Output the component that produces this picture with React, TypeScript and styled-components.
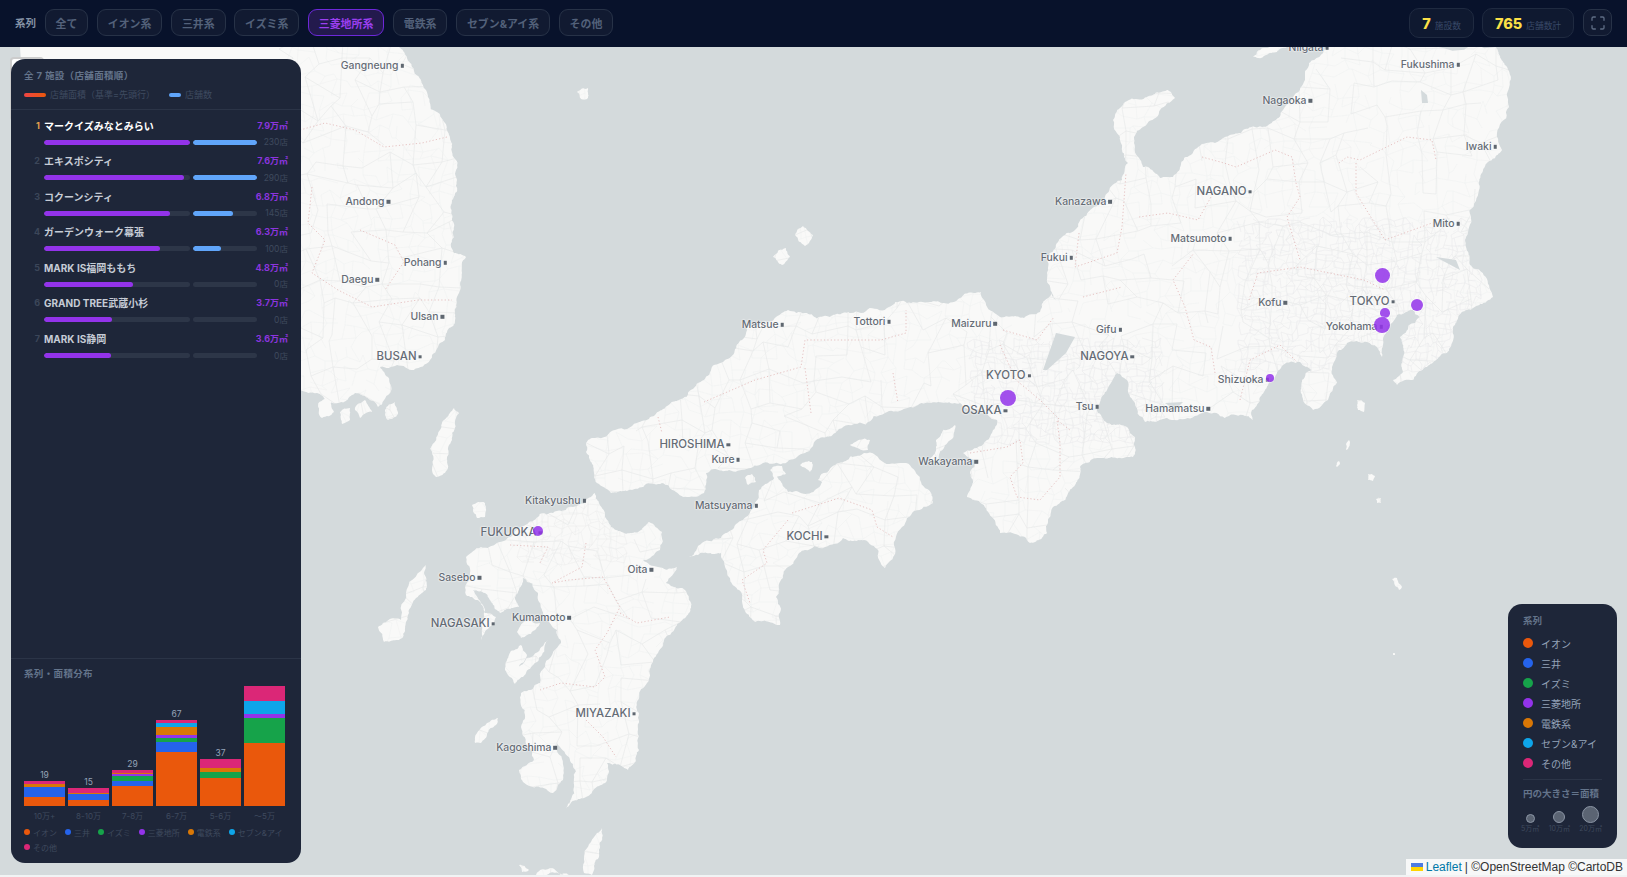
import { useMemo } from "react";
import styled, { createGlobalStyle } from "styled-components";
import { Maximize } from "lucide-react";

const SERIES = [
    { name: "イオン", color: "#ea580c" },
    { name: "三井", color: "#2563eb" },
    { name: "イズミ", color: "#16a34a" },
    { name: "三菱地所", color: "#9333ea" },
    { name: "電鉄系", color: "#d97706" },
    { name: "セブン&アイ", color: "#0ea5e9" },
    { name: "その他", color: "#db2777" },
];

const FILTERS = ["全て", "イオン系", "三井系", "イズミ系", "三菱地所系", "電鉄系", "セブン&アイ系", "その他"];

const FACILITIES = [
    { name: "マークイズみなとみらい", area: 7.9, shops: 230 },
    { name: "エキスポシティ", area: 7.6, shops: 290 },
    { name: "コクーンシティ", area: 6.8, shops: 145 },
    { name: "ガーデンウォーク幕張", area: 6.3, shops: 100 },
    { name: "MARK IS福岡ももち", area: 4.8, shops: 0 },
    { name: "GRAND TREE武蔵小杉", area: 3.7, shops: 0 },
    { name: "MARK IS静岡", area: 3.6, shops: 0 },
];

// heights in px, bottom to top, index into SERIES
const BARS = [
    { label: "10万+", count: 19, parts: [[0, 9], [1, 9.7], [4, 3], [6, 3.3]] },
    { label: "8-10万", count: 15, parts: [[0, 6], [1, 5.7], [4, 1.3], [6, 5]] },
    { label: "7-8万", count: 29, parts: [[0, 20], [1, 5], [2, 5], [3, 2], [4, 1], [6, 3]] },
    { label: "6-7万", count: 67, parts: [[0, 54], [1, 10], [2, 4], [3, 3], [4, 7.7], [5, 4.3], [6, 3]] },
    { label: "5-6万", count: 37, parts: [[0, 28], [2, 6], [4, 4], [6, 9]] },
    { label: "〜5万", count: 0, parts: [[0, 63], [2, 25], [3, 4], [5, 13], [6, 15]] },
];

const CITIES = [
    { name: "Gangneung", x: 402, y: 65 },
    { name: "Andong", x: 388, y: 201 },
    { name: "Pohang", x: 445, y: 262 },
    { name: "Daegu", x: 377, y: 279 },
    { name: "Ulsan", x: 442, y: 316 },
    { name: "BUSAN", x: 420, y: 356, major: true },
    { name: "Matsue", x: 782, y: 324 },
    { name: "Tottori", x: 889, y: 321 },
    { name: "Maizuru", x: 995, y: 323 },
    { name: "HIROSHIMA", x: 728, y: 444, major: true },
    { name: "Kure", x: 738, y: 459 },
    { name: "Wakayama", x: 976, y: 461 },
    { name: "Kitakyushu", x: 584, y: 500 },
    { name: "FUKUOKA", x: 540, y: 532, major: true },
    { name: "Matsuyama", x: 756, y: 505 },
    { name: "KOCHI", x: 826, y: 536, major: true },
    { name: "Sasebo", x: 479, y: 577 },
    { name: "Oita", x: 651, y: 569 },
    { name: "NAGASAKI", x: 493, y: 623, major: true },
    { name: "Kumamoto", x: 569, y: 617 },
    { name: "MIYAZAKI", x: 634, y: 713, major: true },
    { name: "Kagoshima", x: 555, y: 747 },
    { name: "Niigata", x: 1327, y: 47 },
    { name: "Fukushima", x: 1458, y: 64 },
    { name: "Nagaoka", x: 1310, y: 100 },
    { name: "Iwaki", x: 1495, y: 146 },
    { name: "NAGANO", x: 1250, y: 191, major: true },
    { name: "Kanazawa", x: 1110, y: 201 },
    { name: "Matsumoto", x: 1230, y: 238 },
    { name: "Mito", x: 1458, y: 223 },
    { name: "Fukui", x: 1071, y: 257 },
    { name: "Kofu", x: 1285, y: 302 },
    { name: "TOKYO", x: 1393, y: 301, major: true },
    { name: "Gifu", x: 1120, y: 329 },
    { name: "NAGOYA", x: 1132, y: 356, major: true },
    { name: "KYOTO", x: 1029, y: 375, major: true },
    { name: "OSAKA", x: 1005, y: 410, major: true },
    { name: "Tsu", x: 1097, y: 406 },
    { name: "Hamamatsu", x: 1208, y: 408 },
    { name: "Shizuoka", x: 1267, y: 379 },
    { name: "Yokohama", x: 1381, y: 326 },
];

const MARKERS = [
    { x: 1382, y: 275, r: 7.5 },
    { x: 1417, y: 305, r: 6.3 },
    { x: 1385, y: 313, r: 4.8 },
    { x: 1382, y: 325, r: 8.3 },
    { x: 1270, y: 378, r: 4.4 },
    { x: 1008, y: 398, r: 8.3 },
    { x: 538, y: 531, r: 5.2 },
];

const LAND = [
    // korea
    "20,47 399,47 412,67 426,90 445,123 452,147 457,180 452,200 454,227 451,247 454,253 466,257 462,273 457,297 455,323 445,340 430,360 414,370 397,365 380,367 388,377 390,393 378,407 355,393 338,403 317,393 300,390 20,400",
    // honshu
    "586,443 595,438 637,423 662,410 679,400 704,380 725,360 742,340 746,327 776,317 788,310 805,313 830,317 851,313 889,307 919,302 944,303 960,298 981,292 986,305 1000,317 1024,318 1040,312 1051,293 1056,300 1047,273 1047,260 1062,237 1075,230 1100,203 1122,180 1128,163 1120,137 1113,120 1120,108 1147,97 1168,90 1175,98 1160,110 1143,127 1134,137 1143,167 1160,178 1173,177 1185,157 1215,143 1241,133 1262,127 1283,110 1305,80 1309,63 1326,47 1496,47 1507,67 1509,107 1502,150 1487,163 1479,190 1468,233 1466,247 1472,267 1493,297 1467,310 1453,327 1452,343 1447,353 1427,367 1413,380 1397,385 1393,380 1403,372 1403,347 1400,337 1420,317 1413,310 1397,315 1383,340 1382,357 1377,347 1367,342 1347,343 1337,353 1332,367 1337,383 1328,400 1313,410 1303,400 1302,380 1312,370 1300,362 1283,365 1275,377 1260,397 1252,410 1253,420 1243,415 1207,412 1167,418 1145,422 1135,403 1130,397 1127,380 1117,373 1107,390 1098,413 1107,423 1127,427 1135,437 1133,457 1120,458 1097,458 1080,467 1073,487 1053,507 1047,533 1030,543 1000,533 992,517 967,497 970,473 975,460 963,453 993,430 997,420 985,412 960,403 931,403 902,410 885,413 843,427 826,437 805,453 797,457 763,463 729,470 706,473 704,493 687,497 662,483 632,490 611,493 597,483 590,460",
    // shikoku
    "689,557 721,538 746,517 759,490 776,475 788,492 818,488 839,463 864,453 906,463 931,493 933,503 902,527 885,568 864,540 843,538 805,550 788,567 776,597 780,625 755,622 746,613 742,597 729,577 721,553 700,553",
    // kyushu
    "529,522 553,513 569,507 595,493 599,503 611,527 632,533 649,522 662,532 660,550 643,560 658,567 677,567 666,583 685,590 691,603 679,623 666,637 658,653 647,683 639,713 639,750 628,770 607,763 607,780 586,797 565,810 574,787 569,757 557,743 563,780 553,793 523,782 519,770 534,760 521,727 521,693 540,683 561,643 548,620 538,593 523,578 515,597 519,607 500,613 485,593 473,590 485,613 496,617 481,640 485,610 466,595 466,557 481,547 506,540",
    // islands
    "507,660 521,645 527,655 517,668 538,652 548,640 542,655 523,677 515,684 505,670",
    "517,632 529,620 540,623 531,634 521,638",
    "378,627 401,620 426,565 426,590 409,613 403,637 384,642",
    "472,505 485,503 485,517 477,518",
    "432,470 440,430 454,408 459,413 452,440 447,470 436,477",
    "577,92 588,88 588,98 581,99",
    "795,235 803,226 813,235 805,246",
    "773,257 786,248 790,257 782,265",
    "584,873 597,833 602,828 599,857 592,875",
    "536,875 552,868 569,875",
    "519,865 529,870 522,872",
    "475,743 487,723 498,718 496,725 481,743",
    "1253,57 1266,48 1287,47 1266,55 1258,58",
    "1357,400 1365,403 1364,412 1358,410",
    "1368,474 1375,476 1373,481 1368,480",
    "1376,499 1381,498 1381,503 1377,503",
    "1392,579 1397,578 1402,587 1399,590",
    "1346,450 1349,440 1350,442 1348,449",
    "1336,466 1339,461 1340,464 1337,467",
    "1393,653 1395,653 1395,655 1393,655",
    "936,440 955,425 953,438 938,462 930,460",
    "355,410 365,400 372,412 360,418",
    "318,405 330,398 334,412 322,418",
    "850,445 870,440 868,450",
    // inland sea islets
    "770,470 782,466 786,474 774,478",
    "800,465 812,462 810,472",
    "745,478 752,474 756,482 748,485",
    "818,480 832,470 836,478 824,484",
    "385,410 395,402 398,414 388,420",
    "340,412 350,408 350,420 342,424",
];

const WATER = [
    "1043,370 1056,333 1075,337 1066,353 1047,370",
    "1421,90 1427,95 1428,103 1422,103",
    "1436,257 1456,260 1460,270 1445,262",
    "1165,403 1183,402 1175,410",
];

const BORDERS = [
    "300,130 325,123 355,130 384,147 422,143 447,137",
    "312,187 308,223 325,240 312,273 338,290 372,307 418,300 452,300",
    "360,230 395,245 404,262 385,290",
    "658,417 662,433",
    "704,402 755,380 801,367 805,340 835,340 881,340 906,333 906,310",
    "805,368 811,413",
    "893,373 898,403",
    "1003,330 1037,340 1054,317",
    "1079,233 1075,267 1117,253 1122,227 1126,173",
    "1083,297 1122,287",
    "1202,157 1224,163 1236,167 1275,150 1292,157 1296,183 1300,197 1287,217 1300,260",
    "1339,163 1347,157 1360,160 1407,137 1432,140 1436,160",
    "1356,163 1356,193 1385,240 1432,223",
    "1249,300 1258,273 1300,267 1364,280 1385,290",
    "1215,373 1211,347 1194,340 1185,307 1173,280 1194,253",
    "1139,217 1168,213 1198,220 1211,197",
    "970,453 1007,447 1020,440 1023,463 1010,477 1017,497 1040,500 1060,477 1060,443 1057,420 1070,430",
    "792,513 839,498 872,510 877,527 893,537",
    "788,520 763,550 767,563 742,580 750,603",
    "510,545 548,547 540,563",
    "586,543 582,567 552,583 569,580 603,577 620,607 607,633 595,650 605,677 595,687 561,683 540,690",
    "620,613 637,623 670,617",
    "586,720 603,737 616,757",
    "1000,345 1016,380 1040,400 1060,420",
    "1240,400 1250,360 1280,345 1300,365",
];

const seeded = (seed: number) => {
    let s = seed;
    return () => {
        s = (s * 16807) % 2147483647;
        return s / 2147483647;
    };
};

// midpoint displacement so the traced coast doesn't look like straight cuts
const roughen = (poly: string, seed: number) => {
    const rnd = seeded(seed);
    let pts = poly.split(" ").map((p) => p.split(",").map(Number));
    for (let level = 0; level < 4; level++) {
        const next: number[][] = [];
        pts.forEach((a, i) => {
            const b = pts[(i + 1) % pts.length];
            const dx = b[0] - a[0];
            const dy = b[1] - a[1];
            const off = (rnd() - 0.5) * 0.3;
            next.push(a);
            if (Math.hypot(dx, dy) > 2.5) {
                next.push([(a[0] + b[0]) / 2 - dy * off, (a[1] + b[1]) / 2 + dx * off]);
            }
        });
        pts = next;
    }
    return pts.map((p) => `${p[0].toFixed(1)},${p[1].toFixed(1)}`).join(" ");
};

// jittered street grid, clipped to the land shapes
const buildRoads = (x0: number, y0: number, x1: number, y1: number, step: number, seed: number) => {
    const rnd = seeded(seed);
    const cols = Math.ceil((x1 - x0) / step);
    const rows = Math.ceil((y1 - y0) / step);
    const pts: number[][][] = [];
    for (let r = 0; r <= rows; r++) {
        pts.push([]);
        for (let c = 0; c <= cols; c++) {
            pts[r].push([
                Math.round(x0 + c * step + (rnd() - 0.5) * step * 0.9),
                Math.round(y0 + r * step + (rnd() - 0.5) * step * 0.9),
            ]);
        }
    }
    let d = "";
    for (let r = 0; r <= rows; r++) {
        for (let c = 0; c <= cols; c++) {
            const p = pts[r][c];
            if (c < cols && rnd() < 0.72) d += `M${p[0]} ${p[1]}L${pts[r][c + 1][0]} ${pts[r][c + 1][1]}`;
            if (r < rows && rnd() < 0.72) d += `M${p[0]} ${p[1]}L${pts[r + 1][c][0]} ${pts[r + 1][c][1]}`;
        }
    }
    return d;
};

const MapDrawing = () => {
    const land = useMemo(() => LAND.map((p, i) => roughen(p, 1234 + i * 77)), []);
    const roads = useMemo(() => buildRoads(290, 40, 1520, 880, 24, 7), []);
    const fine = useMemo(
        () => [
            buildRoads(290, 40, 1520, 880, 11, 31),
            buildRoads(1240, 220, 1480, 370, 6, 97),
            buildRoads(970, 340, 1160, 440, 6, 53),
            buildRoads(520, 500, 620, 560, 7, 211),
        ],
        []
    );
    return (
        <MapSvg viewBox="0 47 1627 828" preserveAspectRatio="none">
            <defs>
                <clipPath id="land">
                    {land.map((p) => <polygon key={p} points={p} />)}
                </clipPath>
            </defs>
            {land.map((p) => <polygon key={p} points={p} fill="#f9f9f8" />)}
            <g clipPath="url(#land)" fill="none">
                <path d={fine[0]} stroke="#eff0f0" strokeWidth="0.5" />
                <path d={fine[1]} stroke="#e7e7e8" strokeWidth="0.45" />
                <path d={fine[2]} stroke="#e7e7e8" strokeWidth="0.45" />
                <path d={fine[3]} stroke="#eaeaeb" strokeWidth="0.45" />
                <path d={roads} stroke="#e6e8e8" strokeWidth="0.6" />
                {BORDERS.map((p) => (
                    <polyline key={p} points={p} stroke="#e3bcbc" strokeWidth="0.9" strokeDasharray="1.2 2.2" />
                ))}
            </g>
            {WATER.map((p) => <polygon key={p} points={p} fill="#d4dadc" />)}
        </MapSvg>
    );
};

const App = () => {
    const maxArea = FACILITIES[0].area;
    const maxShops = FACILITIES[0].shops;
    return (
        <Page>
            <GlobalStyle />
            <Header>
                <FilterLabel>系列</FilterLabel>
                {FILTERS.map((f) => (
                    <FilterButton key={f} $active={f === "三菱地所系"}>{f}</FilterButton>
                ))}
                <HeaderRight>
                    <StatBox>
                        <StatNumber>7</StatNumber>
                        <StatLabel>施設数</StatLabel>
                    </StatBox>
                    <StatBox>
                        <StatNumber>765</StatNumber>
                        <StatLabel>店舗数計</StatLabel>
                    </StatBox>
                    <IconButton><Maximize size={16} strokeWidth={2} /></IconButton>
                </HeaderRight>
            </Header>
            <MapArea>
                <MapDrawing />
                <ZoomControl />
                {CITIES.map((c) => (
                    <CityLabel key={c.name} $x={c.x} $y={c.y - 46.3} $major={!!c.major}>
                        {c.name}
                        <CityDot />
                    </CityLabel>
                ))}
                {MARKERS.map((m) => (
                    <Marker key={`${m.x}-${m.y}`} $x={m.x} $y={m.y - 47} $r={m.r} />
                ))}
                <SidePanel>
                    <PanelHead>
                        <PanelTitle>全 7 施設（店舗面積順）</PanelTitle>
                        <KeyRow>
                            <KeyBar $w={22} $bg="linear-gradient(to right, #ef4444, #ea580c)" />
                            <KeyText>店舗面積（基準=先頭行）</KeyText>
                            <KeyBar $w={12} $bg="#60a5fa" />
                            <KeyText>店舗数</KeyText>
                        </KeyRow>
                    </PanelHead>
                    <RankList>
                        {FACILITIES.map((f, i) => (
                            <RankRow key={f.name}>
                                <NameLine>
                                    <RankNo $first={i === 0}>{i + 1}</RankNo>
                                    <FacilityName $first={i === 0}>{f.name}</FacilityName>
                                    <AreaValue>{f.area}万㎡</AreaValue>
                                </NameLine>
                                <BarLine>
                                    <Track>
                                        <Fill $c="#9333ea" style={{ width: `${(f.area / maxArea) * 100}%` }} />
                                    </Track>
                                    <Track>
                                        <Fill $c="#60a5fa" style={{ width: `${Math.min(100, (f.shops / maxShops) * 100)}%` }} />
                                    </Track>
                                    <ShopCount>{f.shops}店</ShopCount>
                                </BarLine>
                            </RankRow>
                        ))}
                    </RankList>
                    <ChartSection>
                        <PanelTitle>系列・面積分布</PanelTitle>
                        <BarChart>
                            {BARS.map((b) => (
                                <BarColumn key={b.label}>
                                    {b.count > 0 && <BarCount>{b.count}</BarCount>}
                                    <BarStack>
                                        {b.parts.map(([s, h]) => (
                                            <BarPart key={s} $c={SERIES[s].color} $h={h} />
                                        ))}
                                    </BarStack>
                                </BarColumn>
                            ))}
                        </BarChart>
                        <AxisRow>
                            {BARS.map((b) => <AxisLabel key={b.label}>{b.label}</AxisLabel>)}
                        </AxisRow>
                        <ChartLegend>
                            {SERIES.map((s) => (
                                <ChartLegendItem key={s.name}>
                                    <ChartDot $c={s.color} />
                                    {s.name}
                                </ChartLegendItem>
                            ))}
                        </ChartLegend>
                    </ChartSection>
                </SidePanel>
                <LegendCard>
                    <LegendTitle>系列</LegendTitle>
                    {SERIES.map((s) => (
                        <LegendRow key={s.name}>
                            <LegendDot $c={s.color} />
                            {s.name}
                        </LegendRow>
                    ))}
                    <LegendRule />
                    <LegendTitle>円の大きさ＝面積</LegendTitle>
                    <SizeRow>
                        <SizeItem><SizeCircle $d={9} /><SizeLabel>5万㎡</SizeLabel></SizeItem>
                        <SizeItem><SizeCircle $d={12} /><SizeLabel>10万㎡</SizeLabel></SizeItem>
                        <SizeItem><SizeCircle $d={17} /><SizeLabel>20万㎡</SizeLabel></SizeItem>
                    </SizeRow>
                </LegendCard>
                <Attribution>
                    <svg width="12" height="8" viewBox="0 0 12 8">
                        <rect width="12" height="4" fill="#4C7BE1" />
                        <rect y="4" width="12" height="4" fill="#FFD500" />
                    </svg>
                    <AttributionLink>Leaflet</AttributionLink>
                    <span>| ©OpenStreetMap ©CartoDB</span>
                </Attribution>
            </MapArea>
        </Page>
    );
};

export default App;

const uiFont = `Inter, "Noto Sans CJK JP", sans-serif`;

const GlobalStyle = createGlobalStyle`
    html, body {
        margin: 0;
        padding: 0;
        background: #f1f3f4;
    }
    * {
        box-sizing: border-box;
    }
`;

const Page = styled.div`
    display: flex;
    flex-direction: column;
    height: 875px;
    overflow: hidden;
    font-family: ${uiFont};
`;

const Header = styled.header`
    position: relative;
    z-index: 5;
    display: flex;
    align-items: center;
    gap: 8.5px;
    flex: 0 0 47px;
    padding: 0 15px 2px 15px;
    background: #08122b;
`;

const FilterLabel = styled.span`
    font-size: 10.5px;
    font-weight: 700;
    color: #8592a6;
`;

const FilterButton = styled.button<{ $active: boolean }>`
    height: 27px;
    padding: 0 10px;
    border-radius: 9px;
    border: 1px solid ${(p) => (p.$active ? "#6d28d9" : "#273247")};
    background: ${(p) => (p.$active ? "#231a4d" : "#111a31")};
    color: ${(p) => (p.$active ? "#9b3ff0" : "#53617a")};
    font-family: inherit;
    font-size: 10.9px;
    font-weight: 700;
    white-space: nowrap;
`;

const HeaderRight = styled.div`
    display: flex;
    align-items: center;
    gap: 8px;
    margin-left: auto;
`;

const StatBox = styled.div`
    display: flex;
    align-items: baseline;
    gap: 4px;
    height: 30px;
    padding: 6px 12px 0;
    border-radius: 10px;
    border: 1px solid #1f2a40;
    background: #0f1930;
`;

const StatNumber = styled.span`
    font-size: 14.5px;
    font-weight: 800;
    color: #fde047;
`;

const StatLabel = styled.span`
    font-size: 8.7px;
    color: #3a4a69;
`;

const IconButton = styled.div`
    display: flex;
    align-items: center;
    justify-content: center;
    width: 29px;
    height: 27px;
    margin-left: 1px;
    border-radius: 8px;
    border: 1px solid #273247;
    background: #111a31;
    color: #5f6d85;
`;

const MapArea = styled.main`
    position: relative;
    flex: 1;
    background: #d4dadc;
    overflow: hidden;
`;

const MapSvg = styled.svg`
    position: absolute;
    inset: 0;
    width: 100%;
    height: 100%;
`;

const ZoomControl = styled.div`
    position: absolute;
    left: 10px;
    top: 10px;
    width: 34px;
    height: 64px;
    border: 2px solid rgba(0, 0, 0, 0.2);
    border-radius: 4px;
    background: #fff;
`;

const CityLabel = styled.div<{ $x: number; $y: number; $major: boolean }>`
    position: absolute;
    left: ${(p) => p.$x + 2}px;
    top: ${(p) => p.$y}px;
    display: flex;
    align-items: center;
    gap: 2px;
    transform: translate(-100%, -50%);
    font-size: ${(p) => (p.$major ? 11.4 : 10.4)}px;
    font-weight: 500;
    line-height: 1;
    color: #656c75;
    white-space: nowrap;
    text-shadow: 0 0 2px #fff, 0 0 2px #fff;
`;

const CityDot = styled.span`
    width: 3.5px;
    height: 3.5px;
    background: #5f6770;
`;

const Marker = styled.div<{ $x: number; $y: number; $r: number }>`
    position: absolute;
    left: ${(p) => p.$x - p.$r}px;
    top: ${(p) => p.$y - p.$r}px;
    width: ${(p) => p.$r * 2}px;
    height: ${(p) => p.$r * 2}px;
    border-radius: 50%;
    background: rgba(147, 51, 234, 0.85);
    box-shadow: 0 0 0 0.8px rgba(255, 255, 255, 0.55);
`;

const SidePanel = styled.aside`
    position: absolute;
    left: 11px;
    top: 12px;
    bottom: 12px;
    width: 290px;
    display: flex;
    flex-direction: column;
    border-radius: 14px;
    background: #1e2639;
`;

const PanelHead = styled.div`
    padding: 10px 13px 0;
    height: 51px;
    border-bottom: 1px solid #2b3447;
`;

const PanelTitle = styled.div`
    font-size: 9.5px;
    font-weight: 700;
    line-height: 13px;
    letter-spacing: 0.35px;
    color: #64748b;
`;

const KeyRow = styled.div`
    display: flex;
    align-items: center;
    margin-top: 6px;
`;

const KeyBar = styled.span<{ $w: number; $bg: string }>`
    width: ${(p) => p.$w}px;
    height: 4px;
    margin-right: 4px;
    border-radius: 2px;
    background: ${(p) => p.$bg};
`;

const KeyText = styled.span`
    margin-right: 14px;
    font-size: 9px;
    color: #3f4b60;
`;

const RankList = styled.div`
    padding: 8px 13px 0 20px;
`;

const RankRow = styled.div`
    height: 35.6px;
`;

const NameLine = styled.div`
    display: flex;
    align-items: center;
    gap: 4px;
    height: 14px;
    margin-bottom: 5px;
`;

const RankNo = styled.span<{ $first: boolean }>`
    width: 9px;
    text-align: right;
    font-size: 9px;
    font-weight: 700;
    color: ${(p) => (p.$first ? "#e5a04e" : "#3c4659")};
`;

const FacilityName = styled.span<{ $first: boolean }>`
    flex: 1;
    font-size: 10px;
    font-weight: 700;
    color: ${(p) => (p.$first ? "#ffffff" : "#c6ccd6")};
    white-space: nowrap;
`;

const AreaValue = styled.span`
    font-size: 9px;
    font-weight: 700;
    color: #8b35de;
    white-space: nowrap;
`;

const BarLine = styled.div`
    display: grid;
    grid-template-columns: 146px 64px 1fr;
    align-items: center;
    gap: 3px;
    margin-left: 13px;
    height: 10px;
`;

const Track = styled.div`
    height: 5px;
    border-radius: 2.5px;
    background: #2d3648;
    overflow: hidden;
`;

const Fill = styled.div<{ $c: string }>`
    height: 100%;
    border-radius: 2.5px;
    background: ${(p) => p.$c};
`;

const ShopCount = styled.span`
    font-size: 8.5px;
    line-height: 10px;
    text-align: right;
    color: #3f4a5e;
    white-space: nowrap;
`;

const ChartSection = styled.section`
    margin-top: auto;
    padding: 8px 16px 11px 13px;
    border-top: 1px solid #2b3447;
`;

const BarChart = styled.div`
    display: flex;
    align-items: flex-end;
    gap: 3px;
    height: 120px;
    margin-top: 6px;
`;

const BarColumn = styled.div`
    flex: 1;
    display: flex;
    flex-direction: column;
    align-items: stretch;
    justify-content: flex-end;
`;

const BarCount = styled.span`
    font-size: 8.5px;
    line-height: 11px;
    text-align: center;
    color: #94a3b8;
`;

const BarStack = styled.div`
    display: flex;
    flex-direction: column-reverse;
`;

const BarPart = styled.div<{ $c: string; $h: number }>`
    height: ${(p) => p.$h}px;
    background: ${(p) => p.$c};
`;

const AxisRow = styled.div`
    display: flex;
    gap: 3px;
    height: 12px;
    margin-top: 4px;
`;

const AxisLabel = styled.span`
    flex: 1;
    font-size: 8px;
    line-height: 12px;
    text-align: center;
    color: #3f4a5e;
`;

const ChartLegend = styled.div`
    display: flex;
    flex-wrap: wrap;
    gap: 5px 8px;
    margin-top: 5px;
`;

const ChartLegendItem = styled.span`
    display: flex;
    align-items: center;
    gap: 3px;
    height: 10px;
    font-size: 8px;
    color: #3f4a5e;
`;

const ChartDot = styled.span<{ $c: string }>`
    width: 6px;
    height: 6px;
    border-radius: 50%;
    background: ${(p) => p.$c};
`;

const LegendCard = styled.aside`
    position: absolute;
    right: 10px;
    top: 557px;
    width: 109px;
    height: 244px;
    padding: 10px 15px;
    border-radius: 14px;
    background: #1e2639;
`;

const LegendTitle = styled.div`
    font-size: 9.5px;
    font-weight: 700;
    line-height: 13px;
    margin-bottom: 6px;
    color: #64748b;
    white-space: nowrap;
`;

const LegendRow = styled.div`
    display: flex;
    align-items: center;
    gap: 8px;
    height: 20px;
    font-size: 10px;
    color: #94a3b8;
    white-space: nowrap;
`;

const LegendDot = styled.span<{ $c: string }>`
    width: 10px;
    height: 10px;
    border-radius: 50%;
    background: ${(p) => p.$c};
`;

const LegendRule = styled.div`
    height: 1px;
    margin: 6px 0 7px;
    background: #2b3447;
`;

const SizeRow = styled.div`
    display: flex;
    align-items: flex-end;
    justify-content: space-between;
    margin: 3px 0 0 -2px;
`;

const SizeItem = styled.div`
    display: flex;
    flex-direction: column;
    align-items: center;
    gap: 1px;
`;

const SizeCircle = styled.span<{ $d: number }>`
    width: ${(p) => p.$d}px;
    height: ${(p) => p.$d}px;
    border-radius: 50%;
    border: 1px solid #8b95a5;
    background: #5b6473;
`;

const SizeLabel = styled.span`
    font-size: 7px;
    line-height: 9px;
    color: #3f4a5e;
    white-space: nowrap;
`;

const Attribution = styled.div`
    position: absolute;
    right: 0;
    bottom: 0;
    display: flex;
    align-items: center;
    gap: 3px;
    height: 16px;
    padding: 0 4px 0 5px;
    background: rgba(255, 255, 255, 0.8);
    font-family: "Liberation Sans", Arial, sans-serif;
    font-size: 12px;
    color: #333;
`;

const AttributionLink = styled.span`
    color: #0078a8;
`;
